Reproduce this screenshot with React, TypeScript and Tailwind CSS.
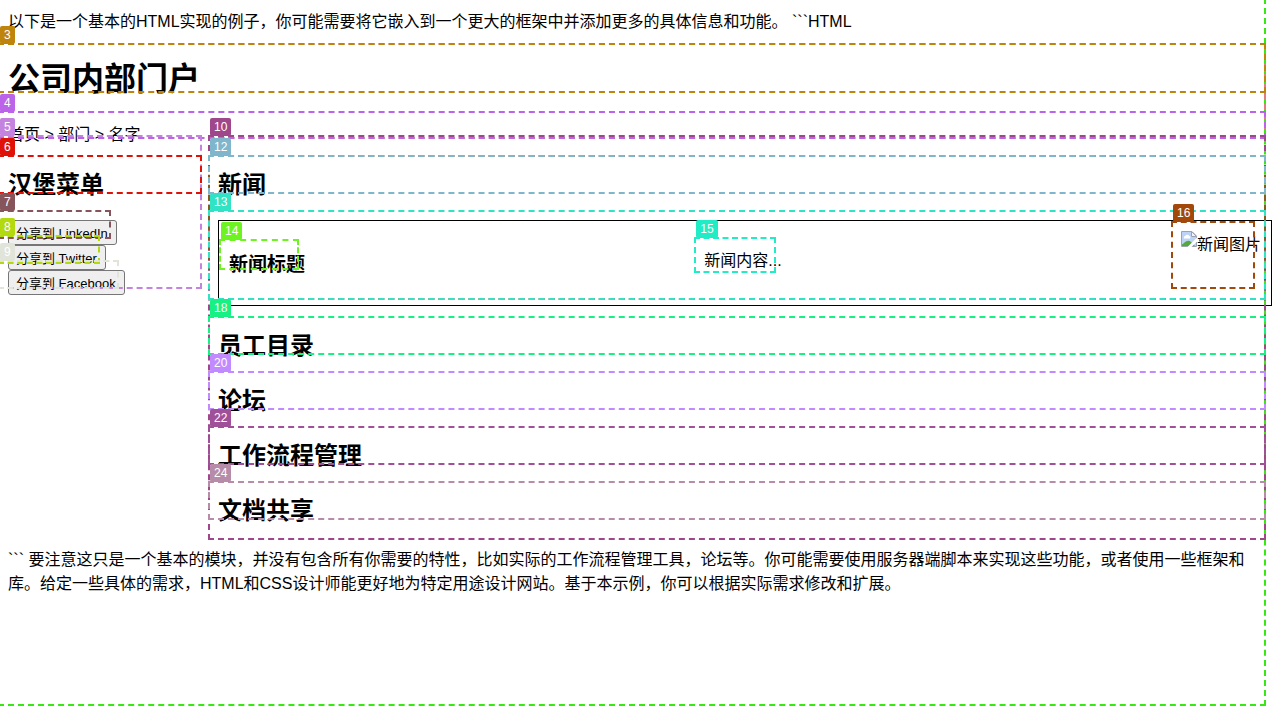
import type { ReactNode } from "react";

type FrameProps = { line: string; children?: ReactNode };

function Frame({ line, children }: FrameProps) {
  return (
    <span
      className={`pointer-events-none absolute -top-2.5 -left-2.5 z-10 box-content block h-full w-full border-2 border-dashed ${line}`}
    >
      {children}
    </span>
  );
}

type MarkerProps = { id: number; line: string; fill: string };

function Marker({ id, line, fill }: MarkerProps) {
  return (
    <Frame line={line}>
      <span
        className={`absolute -top-[19px] left-0 rounded-xs px-1 py-0.5 text-[12px] leading-[14px] font-normal text-white ${fill}`}
      >
        {id}
      </span>
    </Frame>
  );
}

function Heading({ children, marker }: { children: ReactNode; marker: ReactNode }) {
  return (
    <h2 className="relative my-5 h-[35px] text-[24px] leading-[normal] font-bold">
      {marker}
      {children}
    </h2>
  );
}

function ShareButton({ children, marker }: { children: ReactNode; marker: ReactNode }) {
  return (
    <div className="relative w-fit">
      {marker}
      <button
        type="button"
        className="block h-[25px] rounded-[3px] border border-[#767676] bg-[#efefef] pr-2 pl-[7px] text-[13px] leading-[normal]"
      >
        {children}
      </button>
    </div>
  );
}

function MissingImage({ label }: { label: string }) {
  return (
    <div role="img" aria-label={label} className="relative flex items-start">
      <Marker id={16} line="border-[#a1480a]" fill="bg-[#a1480a]" />
      <svg width="16" height="16" viewBox="0 0 16 16" aria-hidden="true" className="shrink-0">
        <path d="M.5.5H11l4.5 4.5v10.5H.5z" fill="#fff" />
        <path d="M1 1h9.5v4.5H15V15H1z" fill="#bdd2f5" />
        <path d="M3 7.5a1.6 1.6 0 0 1 1.2-2.4 2.1 2.1 0 0 1 4 0A1.4 1.4 0 0 1 9 7.5z" fill="#fff" />
        <path d="M1 15v-1.5c2-1 3.5-3.7 6-3.7s3.5 1.7 4.5 2.7L14 15z" fill="#55a83b" />
        <path d="M.5 15.5V.5H11l4.5 4.5v10.5z" fill="none" stroke="#9ca3ae" />
        <path d="M10.5.5v5h5z" fill="#f1f3f6" stroke="#9ca3ae" />
        <path d="M16 6.5v4L10.5 16H6.5z" fill="#fff" />
      </svg>
      <span className="leading-[normal]">{label}</span>
    </div>
  );
}

export default function App() {
  return (
    <div className="flow-root bg-white font-['Liberation_Sans','Noto_Sans_CJK_SC',sans-serif] text-[16px] leading-[normal] text-black">
      <div className="relative m-2 min-h-[calc(100vh-16px)]">
        <Frame line="border-[#37e812]" />
        <p>以下是一个基本的HTML实现的例子，你可能需要将它嵌入到一个更大的框架中并添加更多的具体信息和功能。 ```HTML</p>

        <header className="relative mt-[21px]">
          <Frame line="border-[#e07b80]" />
          <h1 className="relative mb-[22px] h-[46px] text-[32px] leading-[normal] font-bold">
            <Marker id={3} line="border-[#bf840b]" fill="bg-[#bf840b]" />
            公司内部门户
          </h1>
          <nav className="relative">
            <Marker id={4} line="border-[#bb63e9]" fill="bg-[#bb63e9]" />
            首页 &gt; 部门 &gt; 名字
          </nav>
        </header>

        <div className="flex items-start gap-2.5">
          <aside className="relative flow-root w-[200px] shrink-0">
            <Marker id={5} line="border-[#c583e0]" fill="bg-[#c583e0]" />
            <Heading marker={<Marker id={6} line="border-[#e01208]" fill="bg-[#e01208]" />}>汉堡菜单</Heading>
            <ShareButton marker={<Marker id={7} line="border-[#85555b]" fill="bg-[#85555b]" />}>
              分享到 LinkedIn
            </ShareButton>
            <ShareButton marker={<Marker id={8} line="border-[#b3d90f]" fill="bg-[#b3d90f]" />}>
              分享到 Twitter
            </ShareButton>
            <ShareButton marker={<Marker id={9} line="border-[#e0e4d9]" fill="bg-[#e0e4d9]" />}>
              分享到 Facebook
            </ShareButton>
          </aside>

          <main className="relative flow-root flex-1">
            <Marker id={10} line="border-[#a0468a]" fill="bg-[#a0468a]" />
            <section className="relative mt-5">
              <Frame line="border-[#8a5a1c]" />
              <Heading marker={<Marker id={12} line="border-[#80b6cb]" fill="bg-[#80b6cb]" />}>新闻</Heading>
              <div className="relative">
                <Marker id={13} line="border-[#2fe3c4]" fill="bg-[#2fe3c4]" />
                <article className="flex justify-between border border-black p-2.5">
                  <h3 className="relative mt-[18px] mb-[19px] h-[27px] text-[19px] leading-[normal] font-bold">
                    <Marker id={14} line="border-[#6df321]" fill="bg-[#6df321]" />
                    新闻标题
                  </h3>
                  <p className="relative my-4">
                    <Marker id={15} line="border-[#20edc6]" fill="bg-[#20edc6]" />
                    新闻内容...
                  </p>
                  <MissingImage label="新闻图片" />
                </article>
              </div>
            </section>
            <Heading marker={<Marker id={18} line="border-[#17f184]" fill="bg-[#17f184]" />}>员工目录</Heading>
            <Heading marker={<Marker id={20} line="border-[#c18bff]" fill="bg-[#c18bff]" />}>论坛</Heading>
            <Heading marker={<Marker id={22} line="border-[#9f5098]" fill="bg-[#9f5098]" />}>工作流程管理</Heading>
            <Heading marker={<Marker id={24} line="border-[#b68ca9]" fill="bg-[#b68ca9]" />}>文档共享</Heading>
          </main>
        </div>

        <p>
          ``` 要注意这只是一个基本的模块，并没有包含所有你需要的特性，比如实际的工作流程管理工具，论坛等。你可能需要使用服务器端脚本来实现这些功能，或者使用一些框架和库。给定一些具体的需求，HTML和CSS设计师能更好地为特定用途设计网站。基于本示例，你可以根据实际需求修改和扩展。
        </p>
      </div>
    </div>
  );
}
